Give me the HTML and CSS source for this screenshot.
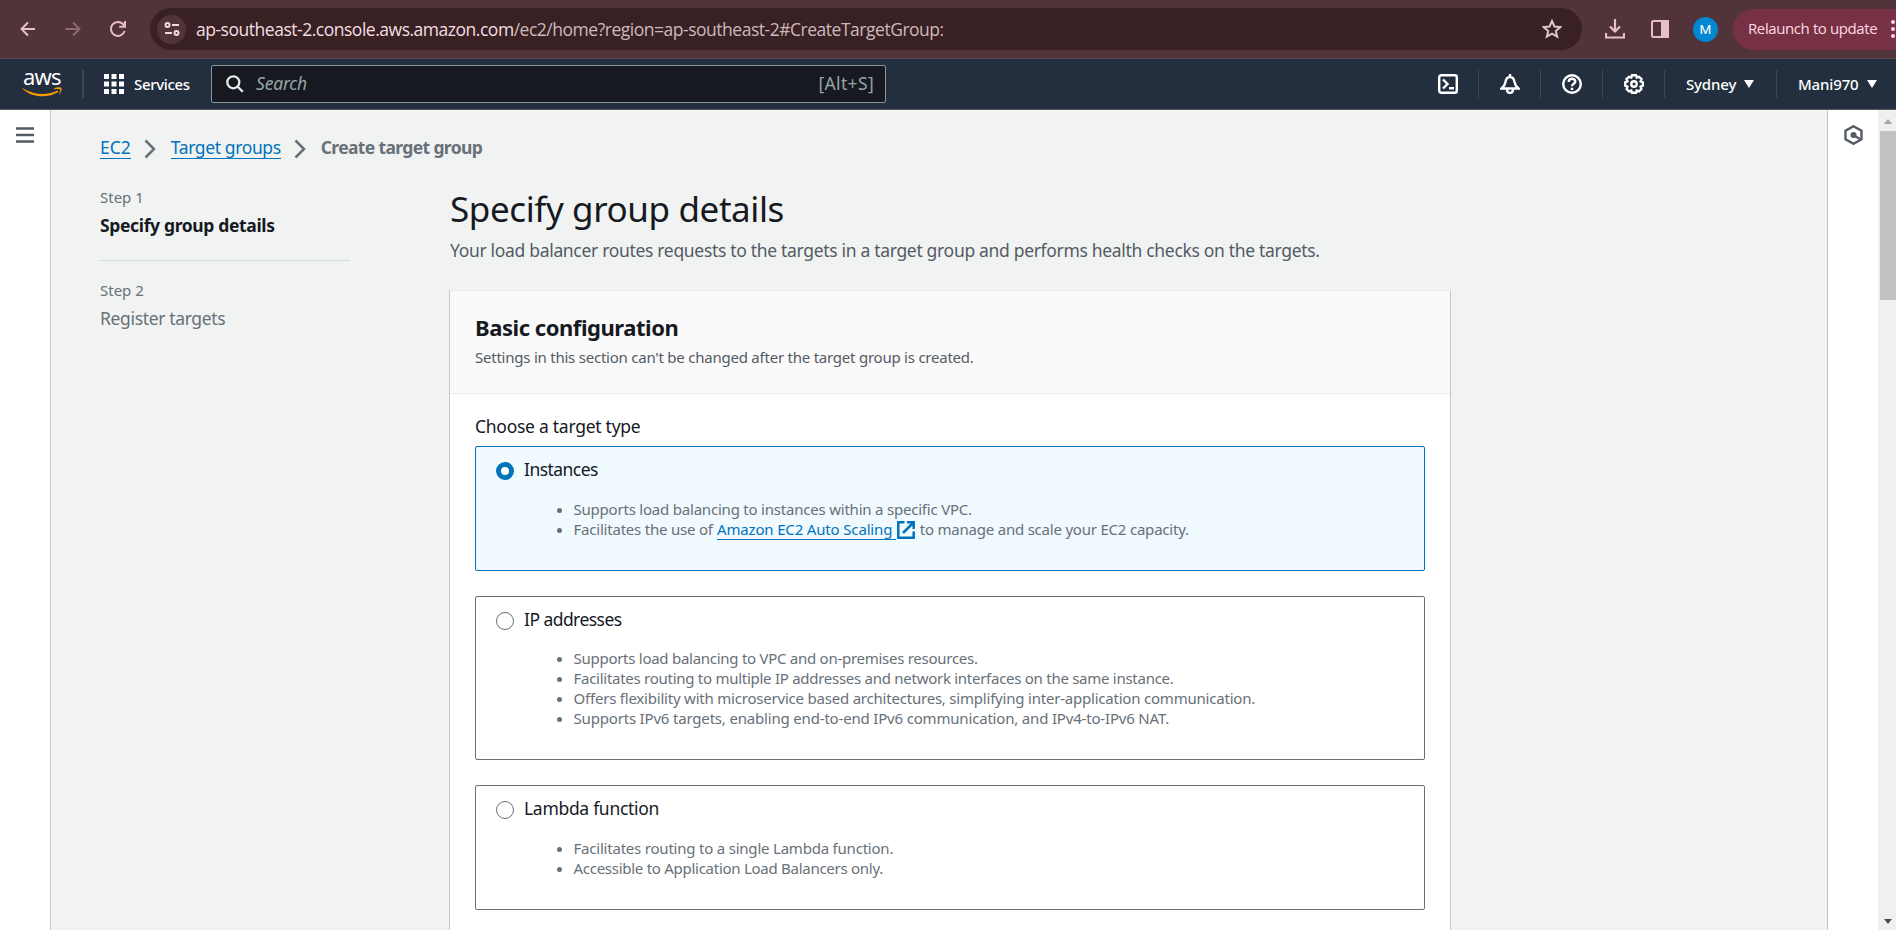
FILE: index.html
```html
<!DOCTYPE html>
<html lang="en">
<head>
<meta charset="utf-8">
<title>Create target group | EC2</title>
<link rel="stylesheet" href="styles.css">
</head>
<body>
<div class="browser">
  <svg class="b-back" width="16" height="16" viewBox="0 0 16 16"><path d="M15 8H2M8 1.5 1.5 8 8 14.500" /></svg>
  <svg class="b-fwd" width="16" height="16" viewBox="0 0 16 16"><path d="M0.500 8H14M8 1.500 14.500 8 8 14.500" /></svg>
  <svg class="b-reload" width="18" height="18" viewBox="0 0 18 18"><path d="M15.600 11A7 7 0 1 1 13.900 4L16 6.200M16 1V6.700H10.200" /></svg>
  <div class="omnibox">
    <div class="site"><svg width="16" height="14" viewBox="0 0 16 14"><circle cx="3.500" cy="3" r="2"/><path d="M8 3h7M1 11h7"/><circle cx="12.500" cy="11" r="2"/></svg></div>
    <div class="url"><span class="host">ap-southeast-2.console.aws.amazon.com</span><span class="path">/ec2/home?region=ap-southeast-2#CreateTargetGroup:</span></div>
    <svg class="star" width="20" height="20" viewBox="0 0 20 20"><path d="M10 2 12.400 7.500 18.300 8.100 13.800 12 15.200 17.700 10 14.600 4.800 17.700 6.200 12 1.700 8.100 7.600 7.500Z"/></svg>
  </div>
  <svg class="b-down" width="20" height="20" viewBox="0 0 20 20"><path d="M10 0V12M5 7.500 10 12.500 15 7.500M1 14V18.500H19V14"/></svg>
  <svg class="b-panel" width="18" height="18" viewBox="0 0 18 18"><rect x="1" y="1" width="16" height="16" rx="1.500" fill="none"/><path class="fill" d="M11 1h6v16h-6z"/></svg>
  <div class="avatar">M</div>
  <div class="relaunch"><span>Relaunch to update</span><svg width="4" height="18" viewBox="0 0 4 18"><circle cx="2" cy="2" r="2"/><circle cx="2" cy="9" r="2"/><circle cx="2" cy="16" r="2"/></svg></div>
</div>

<div class="nav">
  <div class="logo"><span>aws</span><svg width="40" height="10" viewBox="0 0 40 10"><path d="M0.500 1C12 8.500 26 8.500 35.500 3.500L36.500 4.800C26 11.500 10 11 0.500 1.800Z"/><path d="M32 1.200C35 0 39 0 39.500 1.200 40 3 38.500 6.500 37 7.600 38 5 38.500 3 38 2.400 37 1.500 34 2 32 2.200Z"/></svg></div>
  <div class="services"><svg width="20" height="20" viewBox="0 0 20 20"><path d="M0 0h5v5H0zM7.500 0h5v5h-5zM15 0h5v5h-5zM0 7.500h5v5H0zM7.500 7.500h5v5h-5zM15 7.500h5v5h-5zM0 15h5v5H0zM7.500 15h5v5h-5zM15 15h5v5h-5z"/></svg><span>Services</span></div>
  <div class="search">
    <svg width="18" height="18" viewBox="0 0 18 18"><circle cx="7.300" cy="7.300" r="6"/><path d="M11.500 11.500 16.800 16.800"/></svg>
    <span class="ph">Search</span><span class="key">[Alt+S]</span>
  </div>
  <div class="tools">
    <div class="tool"><svg width="20" height="20" viewBox="0 0 20 20"><rect x="1.200" y="1.200" width="17.600" height="17.600" rx="2"/><path d="M5 5.500 9.500 10 5 14.500M11 14.200H16"/></svg></div>
    <div class="tool"><svg width="20" height="20" viewBox="0 0 20 20"><path d="M10 0V3M1.500 14.500H18.500C15.500 12 15 11 14.500 8 14 4.500 12.500 3 10 3S6 4.500 5.500 8C5 11 4.500 12 1.500 14.500ZM7 15.500C7 20 13 20 13 15.500"/></svg></div>
    <div class="tool"><svg width="20" height="20" viewBox="0 0 20 20"><circle cx="10" cy="10" r="8.800"/><path d="M6.700 8C6.700 3.800 13.300 3.800 13.300 7.500 13.300 10 10 9.500 10 12.300M10 13.800V16"/></svg></div>
    <div class="tool"><svg width="20" height="20" viewBox="0 0 20 20"><circle cx="10" cy="10" r="2.700"/><path d="M8 1.200H12L12.700 3.500 15 2.800 17.500 5 16.600 7.300 18.800 8.300V11.700L16.600 12.700 17.300 15.200 15 17.300 12.700 16.500 12 18.800H8L7.300 16.500 5 17.300 2.700 15.200 3.400 12.700 1.200 11.700V8.300L3.400 7.300 2.500 5 5 2.800 7.300 3.500Z"/></svg></div>
    <div class="menu region"><span>Sydney</span><i></i></div>
    <div class="menu account"><span>Mani970</span><i></i></div>
  </div>
</div>

<div class="shell">
  <div class="side left"><svg width="18" height="16" viewBox="0 0 18 16"><path d="M0 1.500H18M0 8H18M0 14.500H18"/></svg></div>
  <div class="main">
    <div class="crumbs">
      <a class="c1">EC2</a>
      <svg width="12" height="20" viewBox="0 0 12 20"><path d="M1.500 1.500 10 10 1.500 18.500"/></svg>
      <a class="c2">Target groups</a>
      <svg width="12" height="20" viewBox="0 0 12 20"><path d="M1.500 1.500 10 10 1.500 18.500"/></svg>
      <b>Create target group</b>
    </div>
    <div class="cols">
      <div class="steps">
        <div class="step current"><small>Step 1</small><span>Specify group details</span></div>
        <div class="step"><small>Step 2</small><span>Register targets</span></div>
      </div>
      <div class="body">
        <h1>Specify group details</h1>
        <p class="sub">Your load balancer routes requests to the targets in a target group and performs health checks on the targets.</p>
        <div class="panel">
          <div class="panel-head"><h2>Basic configuration</h2><p>Settings in this section can't be changed after the target group is created.</p></div>
          <div class="panel-body">
            <div class="label">Choose a target type</div>
            <div class="tile selected">
              <div class="opt"><i></i><span class="t1">Instances</span></div>
              <ul>
                <li>Supports load balancing to instances within a specific VPC.</li>
                <li>Facilitates the use of <a>Amazon EC2 Auto Scaling </a><svg class="ext" width="18" height="18" viewBox="0 0 18 18"><path d="M7.500 1.300H1.300V16.700H16.700V10.500M10 1.300H16.700V8M16.500 1.500 6 12"/></svg> to manage and scale your EC2 capacity.</li>
              </ul>
            </div>
            <div class="tile long">
              <div class="opt"><i></i><span class="t2">IP addresses</span></div>
              <ul>
                <li class="tight">Supports load balancing to VPC and on-premises resources.</li>
                <li class="tight">Facilitates routing to multiple IP addresses and network interfaces on the same instance.</li>
                <li>Offers flexibility with microservice based architectures, simplifying inter-application communication.</li>
                <li class="loose">Supports IPv6 targets, enabling end-to-end IPv6 communication, and IPv4-to-IPv6 NAT.</li>
              </ul>
            </div>
            <div class="tile">
              <div class="opt"><i></i><span class="t3">Lambda function</span></div>
              <ul>
                <li>Facilitates routing to a single Lambda function.</li>
                <li class="tight">Accessible to Application Load Balancers only.</li>
              </ul>
            </div>
          </div>
        </div>
      </div>
    </div>
  </div>
  <div class="side right"><svg width="19" height="20" viewBox="0 0 19 20"><path d="M9.500 1.200 17.500 5.600V14.400L9.500 18.800 1.500 14.400V5.600Z"/><circle class="dot" cx="9.500" cy="10" r="3"/><path d="M10 10.500 16 14"/></svg></div>
  <div class="scroll"><i class="up"></i><div class="thumb"></div><i class="down"></i></div>
</div>
</body>
</html>
```
FILE: styles.css
```css
* { box-sizing: border-box; }
body { margin: 0; width: 1896px; height: 930px; overflow: hidden; font-family: "Noto Sans", sans-serif; font-size: 17.5px; line-height: 27.5px; color: #16191f; background: #f1f3f3; }
svg { display: block; flex: none; fill: none; }
h1, h2, p, ul { margin: 0; padding: 0; font-weight: 400; }
span, a, p, h1, h2, li, b { white-space: nowrap; }

.browser { height: 59px; background: #50343a; border-bottom: 1px solid #5f4a50; display: flex; align-items: center; padding-left: 20px; overflow: hidden; stroke: #e8bfc7; stroke-width: 2; }
.b-fwd { margin-left: 29px; stroke: #8b6a70; }
.b-reload { margin-left: 28px; }
.omnibox { margin-left: 23px; width: 1432px; flex: none; height: 42px; border-radius: 21px; background: #382023; display: flex; align-items: center; padding-left: 7px; }
.site { width: 29px; height: 29px; border-radius: 50%; background: #50343a; display: flex; align-items: center; justify-content: center; stroke: #f0dadd; }
.url { margin-left: 10px; flex: 1; padding-top: 1px; font-family: "Open Sans", sans-serif; font-size: 17.5px; letter-spacing: -0.48px; }
.host { color: #f3dfe2; }
.path { color: #cdb8bb; }
.star { margin-right: 20px; stroke: #dcc5c8; stroke-width: 2; }
.b-down { margin-left: 23px; stroke-width: 2.200; }
.b-panel { margin-left: 26px; }
.fill { fill: #e8bfc7; }
.avatar { margin-left: 24px; width: 25px; height: 25px; border-radius: 50%; background: #0288d1; color: #fff; font: 13.5px/25px Roboto, sans-serif; text-align: center; flex: none; }
.relaunch { margin-left: 15px; width: 190px; flex: none; height: 41px; border-radius: 21px 0 0 21px; background: #773144; color: #ffd9e2; display: flex; align-items: center; padding-left: 15px; font-family: "Open Sans", sans-serif; font-size: 15px; letter-spacing: -0.4px; }
.relaunch svg { margin-left: auto; margin-right: 28px; fill: #ffd9e2; stroke: none; }

.nav { height: 51px; background: #232f3e; border-bottom: 1px solid #545b64; display: flex; align-items: center; color: #fff; font-weight: 500; font-size: 15px; }
.logo { width: 84px; height: 28px; border-right: 2px solid #414750; padding-left: 22px; font: 400 22px/14px "Noto Sans", sans-serif; letter-spacing: -0.8px; }
.logo span { display: block; margin-left: 1px; height: 18px; line-height: 13px; }
.logo svg { fill: #ff9900; margin-top: -1px; }
.services { width: 127px; display: flex; align-items: center; padding-left: 20px; gap: 10px; letter-spacing: -0.35px; }
.services span, .menu span { padding-top: 2px; }
.services svg { fill: #fff; }
.search { width: 675px; height: 38px; border: 1px solid #879596; border-radius: 2px; background: #16191f; display: flex; align-items: center; padding: 0 11px 0 14px; color: #95a5a6; font-weight: 400; font-size: 17.5px; }
.search svg { stroke: #e8eaea; stroke-width: 2.300; }
.ph { margin-left: 12px; font-style: italic; letter-spacing: -0.2px; }
.key { margin-left: auto; letter-spacing: 0.35px; }
.tools { margin-left: auto; display: flex; align-items: center; height: 28px; }
.tool { width: 62px; height: 28px; border-right: 1px solid #414750; display: flex; align-items: center; justify-content: center; }
.tool svg { stroke: #fff; stroke-width: 2.400; }
.menu { height: 28px; display: flex; align-items: center; padding-left: 21px; letter-spacing: -0.15px; }
.menu i { border: 5px solid transparent; border-top: 8px solid #fff; border-bottom: 0; margin-left: 8px; }
.region { width: 112px; border-right: 1px solid #414750; }
.account { width: 119px; }

.shell { display: flex; height: 820px; }
.side { background: #fff; width: 51px; flex: none; display: flex; justify-content: center; align-items: flex-start; }
.left { border-right: 1px solid #c2c6c6; padding-top: 17px; }
.left svg { stroke: #545b64; stroke-width: 2.300; }
.right { border-left: 1px solid #bfc3c3; padding-top: 15px; }
.right svg { stroke: #545b64; stroke-width: 2.400; }
.dot { fill: #545b64; stroke: none; }
.scroll { width: 18px; background: #f0f0f0; padding-left: 2px; display: flex; flex-direction: column; align-items: center; }
.up, .down { border: 4.500px solid transparent; }
.up { border-top: 0; border-bottom: 5px solid #a3a3a3; margin-top: 9px; }
.down { border-bottom: 0; border-top: 5px solid #505050; margin: auto 0 6px; }
.thumb { width: 16px; height: 169px; margin-top: 7px; background: #c1c1c1; }

.main { flex: 1; overflow: hidden; padding: 23px 0 0 49px; }
.crumbs { display: flex; align-items: center; height: 29px; color: #687078; }
.crumbs svg { margin: 2px 15px 0 13px; stroke: #687078; stroke-width: 2.500; }
a { color: #0073bb; border-bottom: 1px solid #0073bb; }
.crumbs a { line-height: 22px; }
.crumbs .c2 { letter-spacing: -0.38px; }
.crumbs b { letter-spacing: -0.64px; }
.cols { display: flex; }
.steps { width: 250px; margin-right: 100px; padding-top: 22px; color: #687078; flex: none; }
.step { height: 93px; }
.step small, .step span { display: block; }
.step small { font-size: 15px; line-height: 25px; padding-top: 1px; }
.step span { line-height: 20px; margin-top: 5px; letter-spacing: -0.35px; }
.current { height: 77px; border-bottom: 1px solid #d5dbdb; margin-bottom: 16px; }
.current span { color: #16191f; font-weight: 700; }
.body { width: 1000px; padding-top: 24px; }
h1 { font-size: 35px; line-height: 45px; letter-spacing: -0.4px; }
.sub { color: #545b64; line-height: 28px; margin-top: 5px; letter-spacing: -0.32px; }
.panel { margin: 26px -1px 0; height: 760px; background: #fff; border: 1px solid #c4c8c8; border-top-color: #eaeded; border-bottom: 0; }
.panel-head { height: 103px; background: #fafafa; border-bottom: 1px solid #eaeded; padding: 22px 25px 0; }
h2 { font-size: 22px; font-weight: 700; line-height: 28px; letter-spacing: -0.45px; }
.panel-head p { font-size: 15px; line-height: 25px; color: #545b64; margin-top: 4px; letter-spacing: -0.23px; }
.panel-body { padding: 18px 25px; }
.label { line-height: 28px; height: 34px; letter-spacing: -0.27px; }
.tile { border: 1px solid #687078; border-radius: 2px; padding: 9px 20px 31px; margin-bottom: 25px; }
.selected { border-color: #0073bb; background: #f1faff; }
.opt { display: flex; align-items: center; height: 27px; }
.opt i { width: 18px; height: 18px; border-radius: 50%; border: 1.500px solid #687078; background: #fff; margin-top: 2px; }
.selected .opt i { border: 5px solid #0073bb; }
.opt span { margin-left: 10px; letter-spacing: -0.55px; }
.opt .t3 { letter-spacing: -0.3px; }
ul { margin-top: 16px; padding-left: 77.500px; color: #687078; font-size: 15px; line-height: 20px; letter-spacing: -0.21px; }
.long ul { margin-top: 15px; }
li { height: 20px; }
li a { margin-left: 0.500px; letter-spacing: -0.16px; }
.tight { letter-spacing: -0.27px; }
.loose { letter-spacing: -0.18px; }
.ext { display: inline-block; vertical-align: -4px; margin: 0 1px; stroke: #0073bb; stroke-width: 2.500; }
```
